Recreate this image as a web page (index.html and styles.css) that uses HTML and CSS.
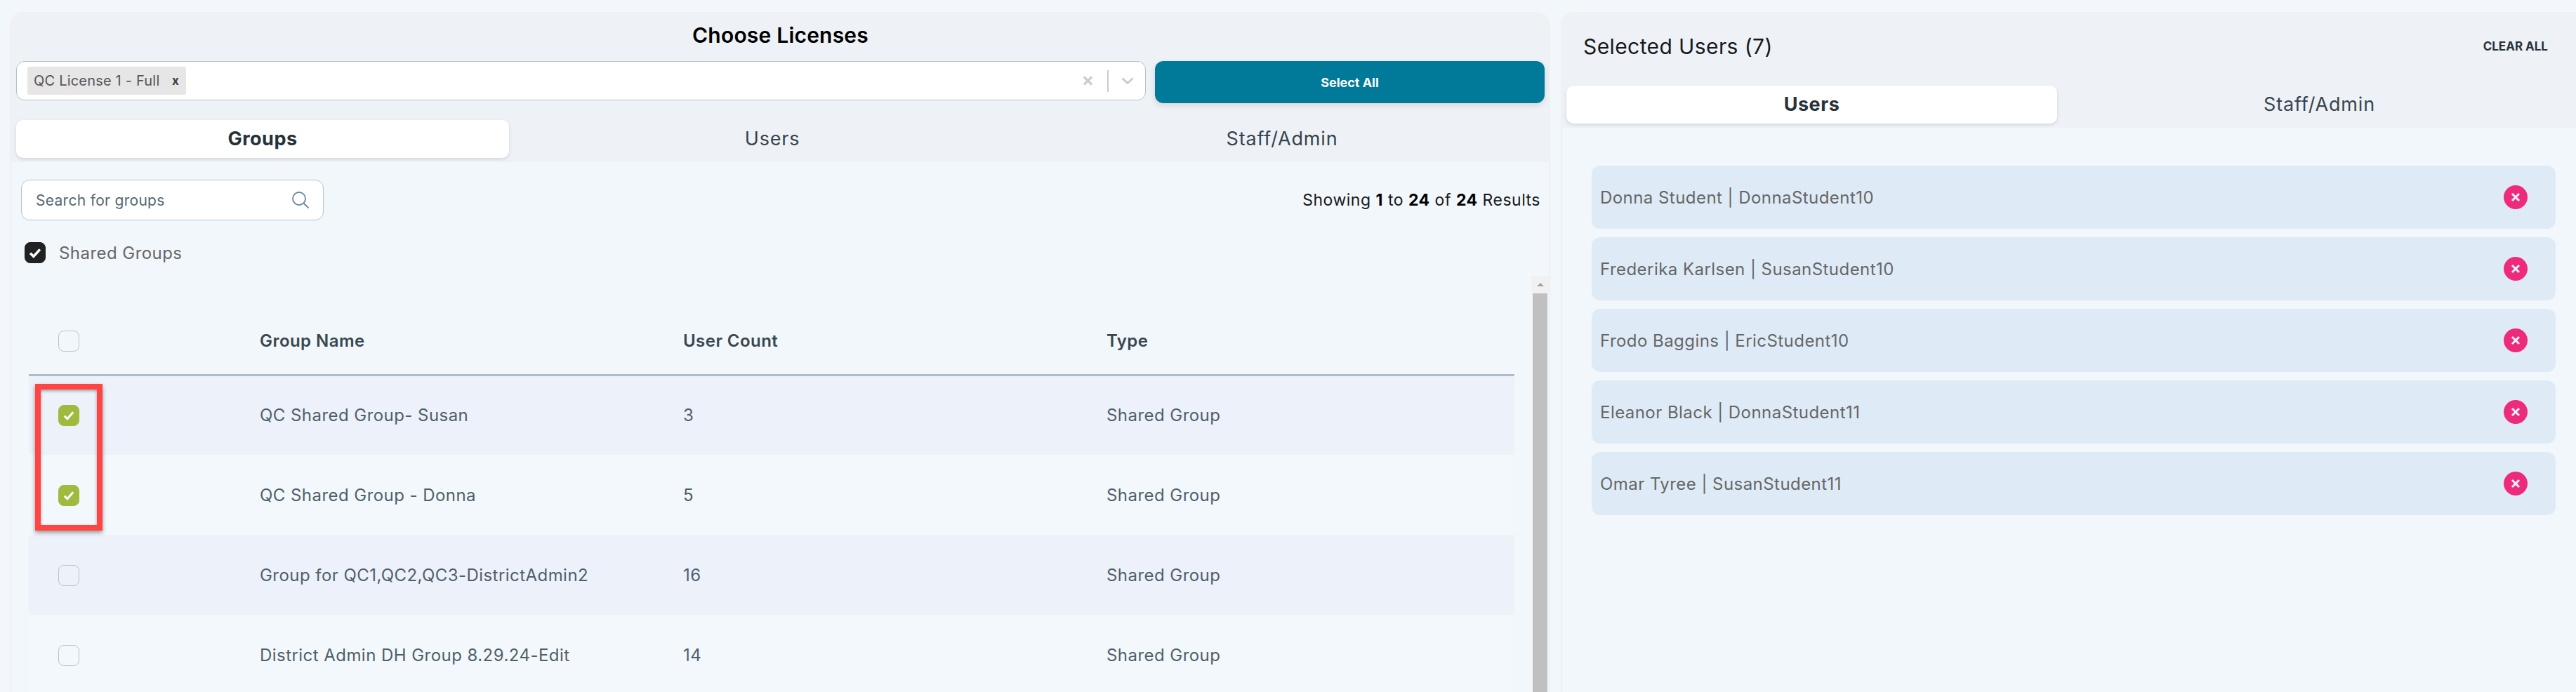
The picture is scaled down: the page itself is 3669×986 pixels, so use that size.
FILE: index.html
```html
<!DOCTYPE html>
<html lang="en">
<head>
    <meta charset="UTF-8">
    <meta name="viewport" content="width=device-width, initial-scale=1.0">
    <title>Choose Licenses</title>
    <link rel="stylesheet" href="styles.css">
</head>
<body>
    <div class="page">
        <div class="panel licenses">
            <div class="panel-head">
                <h1 class="title">Choose Licenses</h1>
                <div class="select-row">
                    <div class="select-box">
                        <span class="chip">QC License 1 - Full <span class="chip-x">x</span></span>
                        <div class="select-icons">
                            <svg class="icon-clear" viewBox="0 0 16 16"><path d="M2 2l12 12M14 2L2 14"/></svg>
                            <span class="select-sep"></span>
                            <svg class="icon-chevron" viewBox="0 0 18 10"><path d="M1.5 1.5L9 8.5l7.5-7"/></svg>
                        </div>
                    </div>
                    <button class="select-all">Select All</button>
                </div>
                <div class="tabs three">
                    <div class="tab active">Groups</div>
                    <div class="tab">Users</div>
                    <div class="tab">Staff/Admin</div>
                </div>
            </div>

            <div class="toolbar">
                <div class="search">
                    <span>Search for groups</span>
                    <svg viewBox="0 0 26 26"><circle cx="11" cy="11" r="9"/><path d="M17.5 17.5l7 7"/></svg>
                </div>
                <div class="results">Showing <b>1</b> to <b>24</b> of <b>24</b> Results</div>
            </div>

            <div class="shared">
                <span class="cb dark"><svg viewBox="0 0 16 16"><path d="M3 8.5l3.4 3.4L13 4.6"/></svg></span>
                <span>Shared Groups</span>
            </div>

            <div class="table-wrap">
                <table class="groups">
                    <thead>
                        <tr>
                            <th class="col-check"><span class="cb"></span></th>
                            <th class="col-name">Group Name</th>
                            <th class="col-count">User Count</th>
                            <th>Type</th>
                        </tr>
                    </thead>
                    <tbody>
                        <tr>
                            <td><span class="cb green"><svg viewBox="0 0 16 16"><path d="M3.5 8.500l3 3L12.500 4.500"/></svg></span></td>
                            <td>QC Shared Group- Susan</td>
                            <td>3</td>
                            <td>Shared Group</td>
                        </tr>
                        <tr>
                            <td><span class="cb green"><svg viewBox="0 0 16 16"><path d="M3.5 8.500l3 3L12.500 4.500"/></svg></span></td>
                            <td>QC Shared Group - Donna</td>
                            <td>5</td>
                            <td>Shared Group</td>
                        </tr>
                        <tr>
                            <td><span class="cb"></span></td>
                            <td>Group for QC1,QC2,QC3-DistrictAdmin2</td>
                            <td>16</td>
                            <td>Shared Group</td>
                        </tr>
                        <tr>
                            <td><span class="cb"></span></td>
                            <td>District Admin DH Group 8.29.24-Edit</td>
                            <td>14</td>
                            <td>Shared Group</td>
                        </tr>
                    </tbody>
                </table>
                <div class="scrollbar">
                    <div class="scroll-up"><span class="arrow"></span></div>
                    <div class="scroll-thumb"></div>
                </div>
                <div class="callout"></div>
            </div>
        </div>

        <div class="panel selected">
            <div class="panel-head">
                <div class="selected-top">
                    <h2>Selected Users (7)</h2>
                    <a href="#" class="clear-all">CLEAR ALL</a>
                </div>
                <div class="tabs two">
                    <div class="tab active">Users</div>
                    <div class="tab">Staff/Admin</div>
                </div>
            </div>
            <div class="user-list">
                <div class="user">Donna Student | DonnaStudent10 <span class="remove"><svg viewBox="0 0 14 14"><path d="M2 2l10 10M12 2L2 12"/></svg></span></div>
                <div class="user">Frederika Karlsen | SusanStudent10 <span class="remove"><svg viewBox="0 0 14 14"><path d="M2 2l10 10M12 2L2 12"/></svg></span></div>
                <div class="user">Frodo Baggins | EricStudent10 <span class="remove"><svg viewBox="0 0 14 14"><path d="M2 2l10 10M12 2L2 12"/></svg></span></div>
                <div class="user">Eleanor Black | DonnaStudent11 <span class="remove"><svg viewBox="0 0 14 14"><path d="M2 2l10 10M12 2L2 12"/></svg></span></div>
                <div class="user">Omar Tyree | SusanStudent11 <span class="remove"><svg viewBox="0 0 14 14"><path d="M2 2l10 10M12 2L2 12"/></svg></span></div>
            </div>
        </div>
    </div>
</body>
</html>
```

FILE: styles.css
```css
* {
    margin: 0;
    padding: 0;
    box-sizing: border-box;
}

body {
    height: 100vh;
    overflow: hidden;
    background-color: #f2f7fb;
    font-family: Inter, "Noto Sans", sans-serif;
    font-size: 24px;
    letter-spacing: 0.45px;
    color: #4f5f69;
}

.page {
    display: flex;
    gap: 15px;
    height: 100%;
    padding: 17px 0 0 14px;
}

.panel {
    display: flex;
    flex-direction: column;
    overflow: hidden;
    border: 2px solid #eff0f2;
    border-bottom: none;
    border-radius: 20px 20px 0 0;
}

.licenses {
    width: 2194px;
    flex-shrink: 0;
}

.selected {
    flex: 1;
    border-right: none;
    border-top-right-radius: 0;
}

.panel-head {
    background-color: #eef2f7;
}

.licenses .panel-head {
    padding: 10px 6px 6px 7px;
}

.title {
    height: 42px;
    line-height: 42px;
    font-size: 30px;
    font-weight: 600;
    letter-spacing: 0.2px;
    text-align: center;
    color: #000;
}

.select-row {
    display: flex;
    gap: 13px;
    align-items: flex-start;
    margin-top: 16px;
}

.select-box {
    display: flex;
    align-items: center;
    justify-content: space-between;
    width: 1609px;
    height: 56px;
    padding: 0 16px 0 15px;
    background-color: #fff;
    border: 1.5px solid #b4c1c9;
    border-radius: 12px;
}

.chip {
    display: flex;
    align-items: center;
    justify-content: space-between;
    width: 226px;
    height: 40px;
    padding: 0 10px 0 9px;
    background-color: #e6e6e6;
    border-radius: 3px;
    font-size: 20px;
    letter-spacing: 0.2px;
    color: #555;
}

.chip-x {
    font-weight: 700;
    font-size: 17px;
    color: #444;
}

.select-icons {
    display: flex;
    align-items: center;
}

.icon-clear {
    width: 15px;
    height: 16px;
    margin-right: 20px;
    fill: none;
    stroke: #ccc;
    stroke-width: 3.4;
}

.select-sep {
    width: 2px;
    height: 31px;
    margin-right: 18px;
    background-color: #ccc;
}

.icon-chevron {
    width: 18px;
    height: 10px;
    fill: none;
    stroke: #ccc;
    stroke-width: 3;
}

.select-all {
    width: 555px;
    height: 60px;
    background-color: #007a98;
    color: #fff;
    border: none;
    border-radius: 12px;
    font-family: inherit;
    font-size: 18px;
    font-weight: 700;
    box-shadow: 0 3px 8px rgba(0, 0, 0, 0.12);
}

.tabs {
    display: grid;
    gap: 24px;
    margin-top: 24px;
}

.tabs.three {
    grid-template-columns: repeat(3, 702px);
}

.tabs.two {
    grid-template-columns: repeat(2, 699px);
    margin-top: 9px;
}

.tab {
    height: 54px;
    line-height: 54px;
    text-align: center;
    font-size: 27px;
    letter-spacing: 0.8px;
    color: #37444c;
    border-radius: 10px;
}

.tab.active {
    background-color: #fff;
    font-size: 27px;
    font-weight: 700;
    letter-spacing: 0.5px;
    color: #263238;
    box-shadow: 0 2px 5px rgba(0, 0, 0, 0.12);
}

.toolbar {
    display: flex;
    align-items: center;
    justify-content: space-between;
    margin-top: 25px;
    padding: 0 12px 0 14px;
}

.search {
    display: flex;
    align-items: center;
    justify-content: space-between;
    width: 431px;
    height: 58px;
    padding: 0 19px 0 20px;
    background-color: #fff;
    border: 1.5px solid #b4c5cd;
    border-radius: 12px;
    font-size: 21px;
    letter-spacing: 0.3px;
    color: #546670;
}

.search svg {
    width: 26px;
    height: 26px;
    fill: none;
    stroke: #67879a;
    stroke-width: 1.8;
}

.results {
    font-size: 23px;
    letter-spacing: 0.5px;
    color: #16191b;
}

.results b {
    color: #000;
}

.shared {
    display: flex;
    align-items: center;
    gap: 19px;
    margin-top: 31px;
    padding-left: 19px;
    color: #666;
}

.cb {
    display: inline-flex;
    align-items: center;
    justify-content: center;
    width: 30px;
    height: 30px;
    vertical-align: middle;
    border: 1.5px solid #b4c5cd;
    border-radius: 8px;
}

.cb svg {
    fill: none;
    stroke: #fff;
}

.cb.dark {
    background-color: #212121;
    border-color: #212121;
}

.cb.dark svg {
    width: 22px;
    height: 22px;
    stroke-width: 2.6;
}

.cb.green {
    background-color: #9dbb3c;
    border-color: #9dbb3c;
}

.cb.green svg {
    width: 22px;
    height: 22px;
    stroke-width: 2.2;
}

.table-wrap {
    position: relative;
    flex: 1;
    display: flex;
    gap: 24px;
    align-items: stretch;
    min-height: 0;
    overflow: hidden;
    margin-top: 18px;
    padding-left: 25px;
}

.groups {
    align-self: flex-start;
    width: 2116px;
    margin-top: 48px;
    flex-shrink: 0;
    border-collapse: collapse;
    table-layout: fixed;
    text-align: left;
}

.groups th {
    height: 93px;
    padding-bottom: 3px;
    font-weight: 600;
    color: #37474f;
    border-bottom: 3px solid #aebcc5;
}

.groups td {
    height: 114px;
}

.groups tbody tr:nth-child(odd) {
    background-color: #edf1f9;
}

.groups tbody tr:nth-child(even) {
    background-color: #f3f8fd;
}

.groups th:first-child,
.groups td:first-child {
    padding-left: 42px;
}

.col-check {
    width: 329px;
}

.col-name,
.col-count {
    width: 603px;
}

.scrollbar {
    display: flex;
    flex-direction: column;
    align-items: center;
    width: 25px;
    flex-shrink: 0;
    background-color: #f4f7fa;
}

.scroll-up {
    display: flex;
    align-items: center;
    justify-content: center;
    width: 100%;
    height: 25px;
    background-color: #f1f1f1;
}

.arrow {
    width: 0;
    height: 0;
    border-left: 5px solid transparent;
    border-right: 5px solid transparent;
    border-bottom: 5px solid #a3a3a3;
}

.scroll-thumb {
    flex: 1;
    width: 21px;
    background-color: #c0c0c0;
}

.callout {
    position: absolute;
    top: 154px;
    left: 34px;
    width: 96px;
    height: 209px;
    border: 8px solid #ff4444;
    box-shadow: 0 3px 6px rgba(0, 0, 0, 0.4), inset 0 2px 4px rgba(0, 0, 0, 0.35);
}

.selected .panel-head {
    padding: 0 15px 6px 6px;
}

.selected-top {
    display: flex;
    align-items: center;
    justify-content: space-between;
    height: 94px;
    padding: 0 25px 0 24px;
}

.selected-top h2 {
    font-size: 30px;
    font-weight: 400;
    letter-spacing: 0.4px;
    color: #16191b;
}

.clear-all {
    font-size: 17px;
    font-weight: 700;
    letter-spacing: 0;
    color: #263238;
    text-decoration: none;
}

.user-list {
    display: flex;
    flex-direction: column;
    gap: 12px;
    padding: 54px 29px 0 42px;
}

.user {
    display: flex;
    align-items: center;
    justify-content: space-between;
    height: 90px;
    padding: 0 40px 0 12px;
    background-color: #deebf6;
    border-radius: 12px;
    color: #666;
}

.remove {
    display: flex;
    align-items: center;
    justify-content: center;
    width: 34px;
    height: 34px;
    background-color: #ee2a7b;
    border-radius: 50%;
}

.remove svg {
    width: 14px;
    height: 14px;
    fill: none;
    stroke: #e8f1f8;
    stroke-width: 3;
}
```
